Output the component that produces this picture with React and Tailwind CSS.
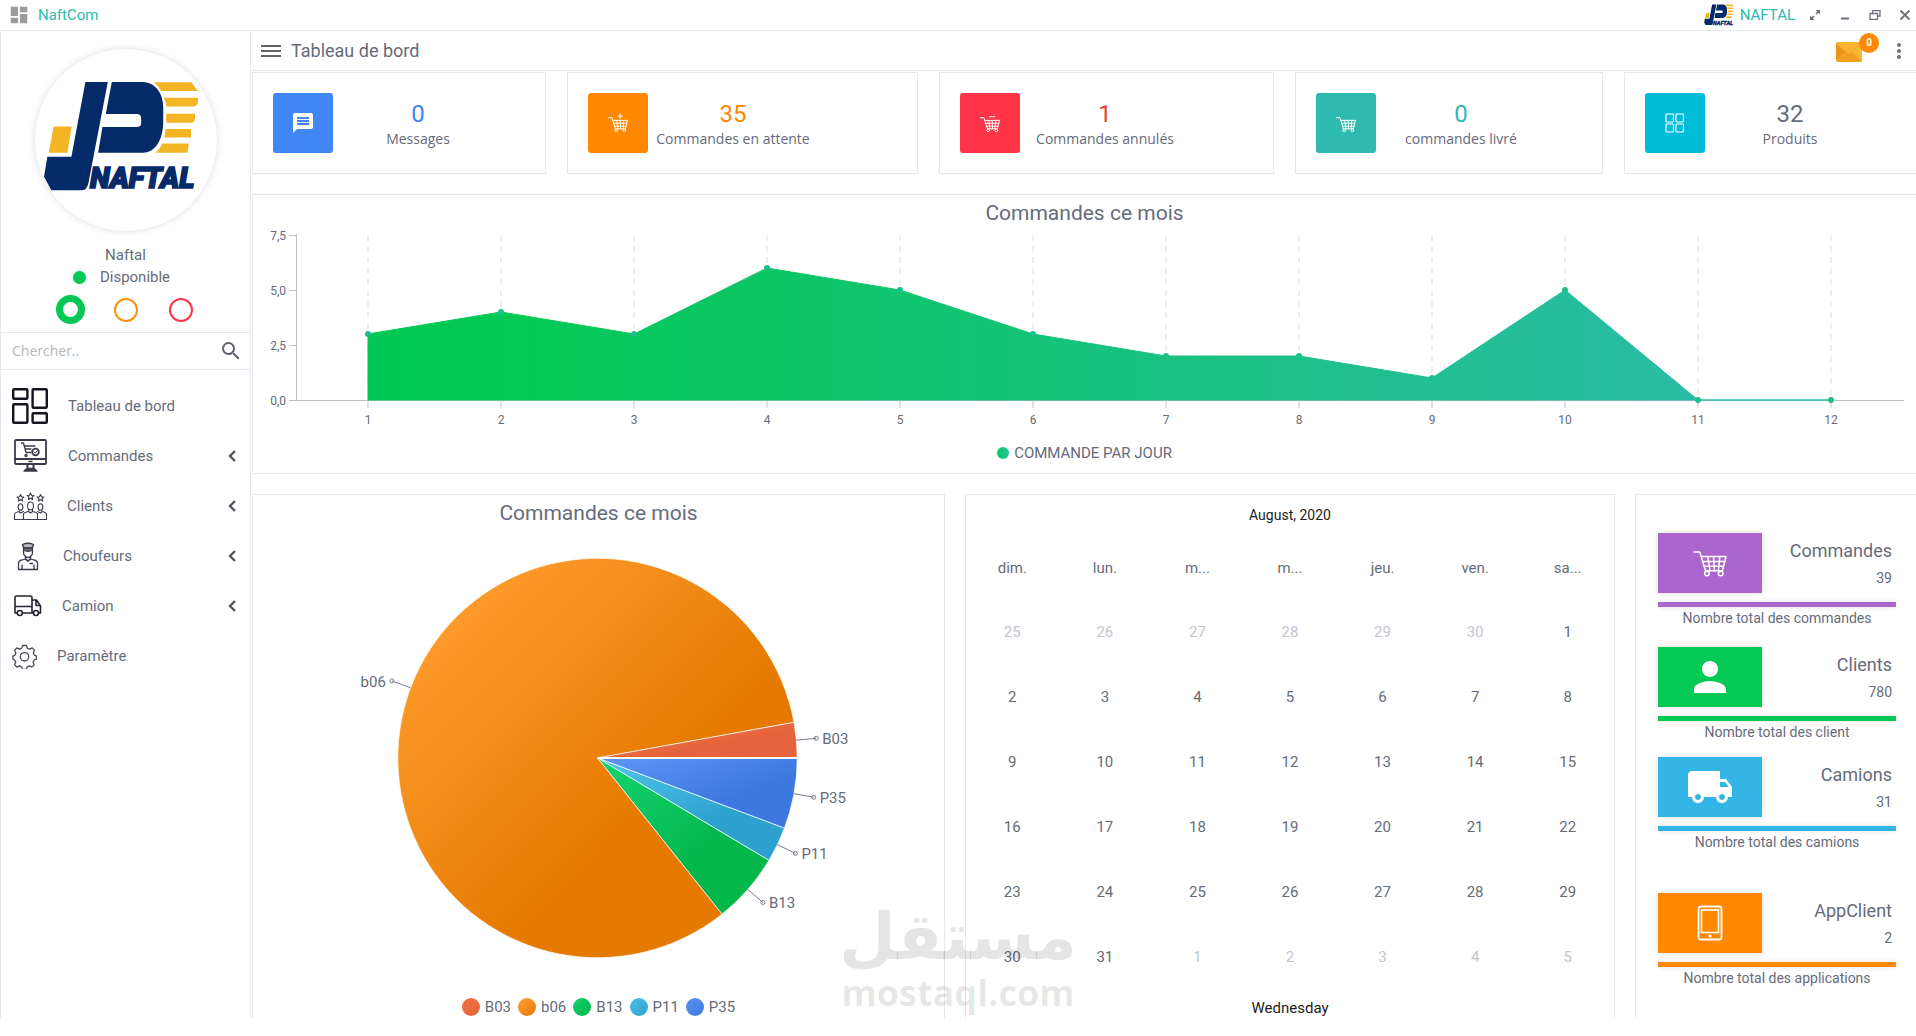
import React from "react";
import { MdMessage, MdPerson, MdLocalShipping, MdSearch, MdMoreVert, MdDashboard } from "react-icons/md";

const LINE = "border-[#e6e8ee]";

/* ---------- logos and icons ---------- */

function NaftalLogo({ className }) {
  return (
    <svg viewBox="130 240 470 344" className={className} role="img" aria-label="Naftal">
      <g fill="#042a68">
        <path d="M257 246H324L266 548Q262 570 244 570H155L133 530L143 470H215Z" />
        <path d="M336 246H430C468 248 490 282 490 322V362C490 418 468 456 430 458H295L308 381H410Q424 381 424 368V355Q424 342 410 342H318Z" />
      </g>
      <g fill="#f3b524">
        <path d="M162 379H216L203 458H147Z" />
        <path d="M462 247H574L594 273H484Q476 258 462 247Z" />
        <path d="M492 293H594V306Q592 319 580 319H499Q498 304 492 293Z" />
        <path d="M499 341H585V355Q583 368 574 368H499Z" />
        <path d="M497 387H573V412H493Z" />
        <path d="M487 430H566L563 458H465Q480 448 487 430Z" />
      </g>
      <text
        x="427" y="562" textAnchor="middle" fontFamily="Roboto, sans-serif" fontWeight="900"
        fontStyle="italic" fontSize="86" fill="#042a68" stroke="#042a68" strokeWidth="5"
      >
        NAFTAL
      </text>
    </svg>
  );
}

function CartIcon({ className, sign, weight = 1.6 }) {
  return (
    <svg viewBox="0 -7 38 36" className={className} fill="none" stroke="#fff" strokeWidth={weight} strokeLinejoin="round" strokeLinecap="round" aria-hidden="true">
      <path d="M1 1H7.500L14 22M9.500 6H37L33 22H14" />
      <path d="M11 11.500H35.500M12.500 17H34.500M16.500 6L19 22M23 6L24 22M30 6L28.500 22" />
      <circle cx="15.500" cy="25" r="2.600" />
      <circle cx="31" cy="25" r="2.600" />
      {sign === "plus" && <path d="M23 -6V2M19 -2H27" />}
      {sign === "minus" && <path d="M18 -1H28" />}
    </svg>
  );
}

function GridIcon() {
  return (
    <svg viewBox="0 0 20 20" className="size-5" fill="none" stroke="#fff" strokeWidth="1.200" aria-hidden="true">
      <rect x="1" y="1" width="7.500" height="8" rx="1" />
      <rect x="11" y="1" width="7.500" height="8" rx="1" />
      <rect x="1" y="11" width="7.500" height="8" rx="1" />
      <rect x="11" y="11" width="7.500" height="8" rx="1" />
    </svg>
  );
}

function TabletIcon() {
  return (
    <svg viewBox="0 0 26 36" className="h-9 w-[26px]" fill="none" stroke="#fff" aria-hidden="true">
      <rect x="1.500" y="1.500" width="23" height="33" rx="2.500" strokeWidth="1.800" />
      <rect x="4.500" y="5" width="17" height="22.500" strokeWidth="1.600" />
      <circle cx="13" cy="31" r="1.600" fill="#fff" stroke="none" />
    </svg>
  );
}

const navIcon = { fill: "none", stroke: "#3c3a4a", strokeWidth: 1.3, strokeLinejoin: "round", strokeLinecap: "round", "aria-hidden": true };

function BoardIcon() {
  return (
    <svg viewBox="0 0 36 36" className="w-9" {...navIcon} stroke="#15131c" strokeWidth="2.400">
      <rect x="1.200" y="1.200" width="14.200" height="9.600" rx="1" />
      <rect x="20.600" y="1.200" width="14.200" height="18.600" rx="1" />
      <rect x="1.200" y="16.200" width="14.200" height="18.600" rx="1" />
      <rect x="20.600" y="25.200" width="14.200" height="9.600" rx="1" />
    </svg>
  );
}

function OrdersIcon() {
  return (
    <svg viewBox="0 0 36 36" className="w-9" {...navIcon}>
      <rect x="3" y="2" width="31" height="24" rx="1" strokeWidth="1.800" />
      <path d="M3 21H34" strokeWidth="1.800" />
      <path d="M17 23.500H20" />
      <path d="M15.500 26.500V31M21.500 26.500V31" strokeWidth="2" />
      <path d="M12 33H25L22 30.500H15Z" fill="#3c3a4a" />
      <path d="M9.500 5H11.500L14 14.500H19M13 8H23M13.500 11H19" />
      <circle cx="23.500" cy="14" r="3.300" strokeWidth="1.800" />
      <path d="M22 14L23.200 15.200L25 13" strokeWidth="1" />
      <circle cx="14" cy="17.500" r="1" />
    </svg>
  );
}

function ClientsIcon() {
  const star = "l1 2.200 2.400.300-1.800 1.600.500 2.400-2.100-1.200-2.100 1.200.500-2.400-1.800-1.600 2.400-.300z";
  return (
    <svg viewBox="0 0 35 35" className="w-[35px]" {...navIcon} strokeWidth="1.100">
      <path d={"M8.500 5.500" + star} />
      <path d={"M18.500 4" + star} />
      <path d={"M28.500 5.500" + star} />
      <ellipse cx="8.500" cy="18" rx="2.400" ry="3.300" />
      <ellipse cx="18.500" cy="17" rx="3" ry="4" />
      <ellipse cx="28.500" cy="18" rx="2.400" ry="3.300" />
      <path d="M2.500 30.500V25.500Q2.500 23.500 7 22.500L8.500 24L11.500 22.500M34.500 30.500V25.500Q34.500 23.500 30 22.500L28.500 24L25.500 22.500M2.500 30.500H34.500M11.500 30.500V25Q12 23.500 16.500 22.500V20.500M25.500 30.500V25Q25 23.500 20.500 22.500V20.500M16.500 22.500L18.500 24L20.500 22.500" />
    </svg>
  );
}

function DriverIcon() {
  return (
    <svg viewBox="0 0 31 31" className="w-[31px]" {...navIcon}>
      <path d="M10.500 3.500Q16 1 21.500 3.500L20.500 7H11.500Z" fill="#b9b8c2" />
      <path d="M11.500 7H20.500V9.500Q16 11 11.500 9.500Z" fill="#6b6977" />
      <path d="M11.500 10V12Q12 16 16 16.500Q20 16 20.500 12V10M13.500 15V18L16 20L18.500 18V15" />
      <path d="M6.500 28.500V23Q6.500 19.500 10 19L13.500 18L16 20L18.500 18L22 19Q25.500 19.500 25.500 23V28.500ZM10 28.500V24M22 28.500V24M18 22.500H20.500" />
    </svg>
  );
}

function TruckIcon() {
  return (
    <svg viewBox="0 0 30 30" className="w-[30px]" {...navIcon} strokeWidth="1.600" stroke="#26242e">
      <path d="M5 22H3V6.500Q3 5 4.500 5H18.500Q20 5 20 6.500V22H10.500M3 15.500H20M20 9H24.500L28.500 15V22H26.500M20 22H21.500M24 9.500V14.500H28" />
      <circle cx="7.800" cy="22" r="2.500" />
      <circle cx="24" cy="22" r="2.500" />
    </svg>
  );
}

function GearIcon() {
  return (
    <svg viewBox="0 0 25 25" className="w-[25px]" {...navIcon} stroke="#4d4b59">
      <path d="M10.500 1.500h4l.8 2.600 2.300 1 2.500-1.200 2.300 2.400-1.100 2.600 1 2.200 2.200 1v3l-2.400.9-1 2.200 1.100 2.600-2.300 2.300-2.500-1.200-2.300 1-.8 2.500h-3.700l-.9-2.500-2.300-1-2.500 1.200L2.600 20.800l1.100-2.600-.9-2.200L.900 15.100v-3l2-1 .9-2.200L2.600 6.300 4.900 3.900l2.500 1.200 2.300-1z" />
      <circle cx="12.500" cy="12.800" r="4.200" />
    </svg>
  );
}

function MailIcon() {
  return (
    <svg viewBox="0 0 26 20" className="h-5 w-[26px]" aria-hidden="true">
      <rect width="26" height="20" rx="2" fill="#f6a623" />
      <path d="M0 2V18L10 10Z" fill="#e8941a" />
      <path d="M26 2V18L16 10Z" fill="#fbb73a" />
      <path d="M1 19.500L13 10L25 19.500Z" fill="#f19f1c" />
      <path d="M0 1Q1 0 2 0H24Q25 0 26 1L13 12Z" fill="#fbb22f" />
    </svg>
  );
}

/* ---------- window chrome ---------- */

const winIcon = { viewBox: "0 0 12 12", className: "size-3", fill: "none", stroke: "#716f80", strokeWidth: 1.6, "aria-hidden": true };

function TitleBar() {
  return (
    <header className={"flex h-[31px] items-center border-b pr-[5px] pl-2 " + LINE}>
      <MdDashboard className="size-[22px] text-[#9c9c9c]" aria-hidden="true" />
      <span className="ml-2 pt-px text-[15px] text-[#2ebaae]">NaftCom</span>
      <div className="ml-auto flex items-center">
        <NaftalLogo className="h-[28px] w-[30px]" />
        <span className="ml-1.5 pt-px text-[15px] text-[#2ebaae]">NAFTAL</span>
        <div className="ml-3.5 flex items-center gap-[18px]">
          <button type="button" aria-label="Plein écran">
            <svg {...winIcon}><path d="M7 5L10 2M5 7L2 10" /><path d="M6.500 1H11V5.500ZM1 6.500V11H5.500Z" fill="#716f80" stroke="none" /></svg>
          </button>
          <button type="button" aria-label="Réduire">
            <svg {...winIcon}><path d="M2 9.500H10" strokeWidth="2" /></svg>
          </button>
          <button type="button" aria-label="Restaurer">
            <svg {...winIcon} strokeWidth="1.300"><path d="M3.500 4V1.700H11V7H8.500M1 4.500H8.500V10.300H1Z" /></svg>
          </button>
          <button type="button" aria-label="Fermer">
            <svg {...winIcon} strokeWidth="1.800"><path d="M1.500 1.500L10.500 10.500M10.500 1.500L1.500 10.500" /></svg>
          </button>
        </div>
      </div>
    </header>
  );
}

/* ---------- sidebar ---------- */

const NAV = [
  { label: "Tableau de bord", Icon: BoardIcon },
  { label: "Commandes", Icon: OrdersIcon, more: true },
  { label: "Clients", Icon: ClientsIcon, more: true },
  { label: "Choufeurs", Icon: DriverIcon, more: true },
  { label: "Camion", Icon: TruckIcon, more: true },
  { label: "Paramètre", Icon: GearIcon },
];

function Sidebar() {
  return (
    <aside className={"w-[251px] shrink-0 border-x " + LINE}>
      <section className={"flex flex-col items-center border-b pt-[17px] pb-2 " + LINE}>
        <div className="flex size-[184px] items-center justify-center rounded-full border border-[#ededf2] shadow-[0_0_7px_rgba(0,0,0,0.10)]">
          <NaftalLogo className="mr-2 mb-1.5 w-[157px]" />
        </div>
        <p className="mt-3 text-[15px] leading-[22px]">Naftal</p>
        <p className="mr-2 flex items-center gap-3.5 text-[15px] leading-[22px]">
          <span className="size-[13px] rounded-full bg-[#04c954] shadow-[0_0_5px_rgba(0,0,0,0.15)]" />
          Disponible
        </p>
        <div role="radiogroup" aria-label="Statut" className="mt-[7px] grid grid-cols-[55px_55px_55px] place-items-center">
          <input type="radio" name="statut" aria-label="Disponible" defaultChecked className="size-[29px] appearance-none rounded-full border-[7px] border-[#04c954]" />
          <input type="radio" name="statut" aria-label="Occupé" className="size-6 appearance-none rounded-full border-2 border-[#ff8f0f]" />
          <input type="radio" name="statut" aria-label="Absent" className="size-6 appearance-none rounded-full border-2 border-[#ff3547]" />
        </div>
      </section>
      <form className={"flex h-[37px] items-center border-b pr-[7px] pl-[11px] " + LINE} onSubmit={(e) => e.preventDefault()}>
        <input
          type="text" aria-label="Chercher" placeholder="Chercher.."
          className="min-w-0 flex-1 font-['Open_Sans',sans-serif] text-sm outline-none placeholder:text-[#b3b6b8]"
        />
        <button type="submit" aria-label="Lancer la recherche"><MdSearch className="size-6 text-[#5f5f6e]" /></button>
      </form>
      <nav className="pt-[11px]">
        {NAV.map(({ label, Icon, more }) => (
          <a key={label} href="#" className="flex h-[50px] items-center gap-5 pr-[14px] pl-[11px]">
            <Icon />
            <span className="flex-1 text-[15px]">{label}</span>
            {more && (
              <svg viewBox="0 0 8 12" className="h-3 w-2" fill="none" stroke="#57545f" strokeWidth="2.400" aria-hidden="true">
                <path d="M7 1L2 6L7 11" />
              </svg>
            )}
          </a>
        ))}
      </nav>
    </aside>
  );
}

/* ---------- top statistics ---------- */

function Stat({ tile, color, value, label, last, children }) {
  return (
    <article className={"flex items-center border p-5 " + LINE + (last ? " border-r-0" : "")}>
      <div className={"flex size-[60px] shrink-0 items-center justify-center rounded-[3px] " + tile}>{children}</div>
      <div className="w-[170px] pt-[3px] text-center">
        <p className={"text-2xl leading-7 " + color}>{value}</p>
        <p className="font-['Open_Sans',sans-serif] text-sm leading-[22px] whitespace-nowrap">{label}</p>
      </div>
    </article>
  );
}

/* ---------- area chart ---------- */

const ORDERS = [3, 4, 3, 6, 5, 3, 2, 2, 1, 5, 0, 0];

function AreaChart() {
  const px = (i) => 115 + i * 133;
  const py = (v) => 175 - v * 22;
  const line = ORDERS.map((v, i) => px(i) + "," + py(v)).join(" ");
  return (
    <section className={"border border-r-0 " + LINE}>
      <h2 className="pt-1 text-center text-[21px] leading-7">Commandes ce mois</h2>
      <svg viewBox="0 2 1663 208" className="block w-full" fontFamily="Roboto, sans-serif" fontSize="12" fill="#666b7a" role="img" aria-label="Commandes par jour">
        <defs>
          <linearGradient id="area"><stop offset="0" stopColor="#00c853" /><stop offset="0.100" stopColor="#04c954" /><stop offset="1" stopColor="#2ebaae" /></linearGradient>
        </defs>
        {ORDERS.map((_, i) => (
          <g key={i}>
            <path d={`M${px(i)} 10V175`} stroke="#e9e9ec" strokeWidth="1.500" strokeDasharray="6 5" />
            <path d={`M${px(i)} 175V183`} stroke="#c4c6cc" />
            <text x={px(i)} y="199" textAnchor="middle">{i + 1}</text>
          </g>
        ))}
        <path d="M43.500 9V175.500M36 175.500H1651M36 10.500H43M36 65.500H43M36 120.500H43" stroke="#bfc1c6" fill="none" />
        <polygon points={`${px(0)},175 ${line} ${px(11)},175`} fill="url(#area)" stroke="url(#area)" />
        {ORDERS.map((v, i) => <circle key={i} cx={px(i)} cy={py(v)} r="3" fill="#1cc088" />)}
        {["7,5", "5,0", "2,5", "0,0"].map((t, i) => <text key={t} x="33" y={15 + i * 55} textAnchor="end">{t}</text>)}
      </svg>
      <p className="flex items-center justify-center gap-[5px] pt-2 pb-2.5 text-[15px] leading-5">
        <span className="size-3 rounded-full bg-gradient-to-r from-[#06c95c] to-[#28bda0]" />
        COMMANDE PAR JOUR
      </p>
    </section>
  );
}

/* ---------- pie chart ---------- */

const SLICES = [
  { name: "P35", start: 0, count: 2, fill: "url(#P35)" },
  { name: "P11", start: 2, count: 1, fill: "url(#P11)" },
  { name: "B13", start: 3, count: 2, fill: "url(#B13)" },
  { name: "b06", start: 5, count: 29, fill: "url(#b06)" },
  { name: "B03", start: 34, count: 1, fill: "url(#B03)" },
];
const TONES = [["B03", "#f0703f", "#e5643e"], ["b06", "#ff9d30", "#e67a00"], ["B13", "#12cf6c", "#04b74b"], ["P11", "#4cbfe8", "#2ea2cf"], ["P35", "#5a92f2", "#3c78df"]];
const LEGEND = [
  ["B03", "from-[#f0703f] to-[#e5643e]"],
  ["b06", "from-[#ff9d30] to-[#e67a00]"],
  ["B13", "from-[#12cf6c] to-[#04b74b]"],
  ["P11", "from-[#4cbfe8] to-[#2ea2cf]"],
  ["P35", "from-[#5a92f2] to-[#3c78df]"],
];

function PieChart() {
  const at = (units, r) => {
    const a = (units / 35) * 2 * Math.PI;
    return [Math.round((345 + r * Math.cos(a)) * 10) / 10, Math.round((231 + r * Math.sin(a)) * 10) / 10];
  };
  return (
    <section className={"border border-b-0 " + LINE}>
      <h2 className="pt-1 text-center text-[21px] leading-7">Commandes ce mois</h2>
      <svg viewBox="0 0 692 470" className="block h-[470px] w-full" fontFamily="Roboto, sans-serif" fontSize="15" fill="#666b7a" role="img" aria-label="Commandes par produit">
        <defs>
          {TONES.map(([id, a, b]) => (
            <linearGradient key={id} id={id} x1="0.100" y1="0.100" x2="0.620" y2="0.620">
              <stop offset="0" stopColor={a} /><stop offset="1" stopColor={b} />
            </linearGradient>
          ))}
        </defs>
        {SLICES.map(({ name, start, count, fill }) => {
          const mid = start + count / 2;
          const left = mid > 9 && mid < 26;
          const [lx, ly] = at(mid, 220);
          return (
            <g key={name}>
              <path d={`M345 231L${at(start, 200)}A200 200 0 ${count > 17 ? 1 : 0} 1 ${at(start + count, 200)}Z`} fill={fill} stroke="#fff" strokeOpacity="0.700" />
              <path d={`M${at(mid, 200)}L${lx} ${ly}`} stroke="#777c89" />
              <circle cx={lx} cy={ly} r="2" fill="none" stroke="#777c89" />
              <text x={left ? lx - 6 : lx + 6} y={ly + 6} textAnchor={left ? "end" : "start"}>{name}</text>
            </g>
          );
        })}
        <path d="M345 231H545" stroke="#fff" strokeWidth="2" />
      </svg>
      <ul className="flex justify-center gap-[7px]">
        {LEGEND.map(([name, tone]) => (
          <li key={name} className="flex items-center gap-[5px] text-[15px] leading-5">
            <span className={"size-[18px] rounded-full bg-gradient-to-br " + tone} />
            {name}
          </li>
        ))}
      </ul>
    </section>
  );
}

/* ---------- calendar ---------- */

const WEEKDAYS = ["dim.", "lun.", "m...", "m...", "jeu.", "ven.", "sa..."];
const WEEKS = [
  [25, 26, 27, 28, 29, 30, 1],
  [2, 3, 4, 5, 6, 7, 8],
  [9, 10, 11, 12, 13, 14, 15],
  [16, 17, 18, 19, 20, 21, 22],
  [23, 24, 25, 26, 27, 28, 29],
  [30, 31, 1, 2, 3, 4, 5],
];

function Calendar() {
  return (
    <section className={"border border-b-0 text-center " + LINE}>
      <h2 className="h-[41px] text-sm leading-10 text-[#1d1d22]">August, 2020</h2>
      <table className="w-full table-fixed text-[15px]">
        <thead>
          <tr className="h-16">{WEEKDAYS.map((d, i) => <th key={i} scope="col" className="font-normal">{d}</th>)}</tr>
        </thead>
        <tbody>
          {WEEKS.map((week, w) => (
            <tr key={w} className="h-[65px]">
              {week.map((d, i) => {
                const outside = (w === 0 && d > 7) || (w === 5 && d < 8);
                return <td key={i} className={outside ? "text-[#c3c5ce]" : ""}>{d}</td>;
              })}
            </tr>
          ))}
        </tbody>
      </table>
      <p className="pt-2 text-[15px] leading-5 text-[#1d1d22]">Wednesday</p>
    </section>
  );
}

/* ---------- totals ---------- */

function Total({ title, value, caption, tone, className, children }) {
  return (
    <article className={className}>
      <div className="flex h-[60px]">
        <div className={"flex w-[104px] items-center justify-center shadow-[0_0_6px_rgba(0,0,0,0.15)] " + tone}>{children}</div>
        <div className="flex-1 pt-1 pr-1 text-right">
          <h3 className="text-lg leading-7">{title}</h3>
          <p className="text-sm leading-[26px]">{value}</p>
        </div>
      </div>
      <div className={"mt-[9px] h-[5px] shadow-[0_0_6px_rgba(0,0,0,0.12)] " + tone} />
      <p className="text-center text-sm leading-[22px]">{caption}</p>
    </article>
  );
}

export default function App() {
  return (
    <div className="relative overflow-hidden bg-white font-[Roboto,sans-serif] text-[#666b7a]">
      <TitleBar />
      <div className="flex">
        <Sidebar />
        <main className="min-w-0 flex-1">
          <div className={"flex h-10 items-center border-b pr-[5px] pl-[10px] " + LINE}>
            <button type="button" aria-label="Menu">
              <svg viewBox="0 0 20 12" className="h-3 w-5" stroke="#5f6270" strokeWidth="2" aria-hidden="true"><path d="M0 1H20M0 6H20M0 11H20" /></svg>
            </button>
            <h1 className="ml-[10px] text-lg leading-6">Tableau de bord</h1>
            <button type="button" aria-label="Messages reçus" className="relative mr-[25px] ml-auto pt-[2px]">
              <MailIcon />
              <span className="absolute -top-[7px] left-[23px] flex size-5 items-center justify-center rounded-full bg-[#ff8800] text-[10px] font-bold text-white">0</span>
            </button>
            <button type="button" aria-label="Plus d'options"><MdMoreVert className="size-6 text-[#716f80]" /></button>
          </div>
          <div className="flex flex-col gap-5 pt-px pl-px">
            <div className="grid grid-cols-[294fr_351fr_335fr_308fr_292fr] gap-[21px]">
              <Stat tile="bg-[#4285f4]" color="text-[#4285f4]" value="0" label="Messages"><MdMessage className="size-6 text-white" /></Stat>
              <Stat tile="bg-[#ff8800]" color="text-[#ff8800]" value="35" label="Commandes en attente"><CartIcon className="size-5" sign="plus" weight={1.9} /></Stat>
              <Stat tile="bg-[#ff3547]" color="text-[#e2472f]" value="1" label="Commandes annulés"><CartIcon className="size-5" sign="minus" weight={1.9} /></Stat>
              <Stat tile="bg-[#2ebaae]" color="text-[#2ebaae]" value="0" label="commandes livré"><CartIcon className="size-5" weight={1.9} /></Stat>
              <Stat tile="bg-[#00bcd8]" color="" value="32" label="Produits" last><GridIcon /></Stat>
            </div>
            <AreaChart />
            <div className="grid grid-cols-[693fr_650fr_281fr] gap-5">
              <PieChart />
              <Calendar />
              <section className={"border-t border-l pt-[38px] pr-5 pl-[22px] " + LINE}>
                <Total title="Commandes" value="39" caption="Nombre total des commandes" tone="bg-[#aa66cc]" className="mb-[18px]"><CartIcon className="h-9 w-[38px] pb-1" weight={1.7} /></Total>
                <Total title="Clients" value="780" caption="Nombre total des client" tone="bg-[#04c954]" className="mb-[14px]"><MdPerson className="size-12 text-white" /></Total>
                <Total title="Camions" value="31" caption="Nombre total des camions" tone="bg-[#33b5e5]" className="mb-10"><MdLocalShipping className="size-12 text-white" /></Total>
                <Total title="AppClient" value="2" caption="Nombre total des applications" tone="bg-[#ff8800]"><TabletIcon /></Total>
              </section>
            </div>
          </div>
        </main>
      </div>
      <div className="pointer-events-none absolute bottom-[7px] left-1/2 flex -translate-x-1/2 flex-col items-center font-bold text-black/10">
        <span dir="rtl" lang="ar" className="font-['DejaVu_Sans',sans-serif] text-[65px] leading-[76px]">مستقل</span>
        <span className="font-['Open_Sans',sans-serif] text-4xl leading-9">mostaql.com</span>
      </div>
    </div>
  );
}
